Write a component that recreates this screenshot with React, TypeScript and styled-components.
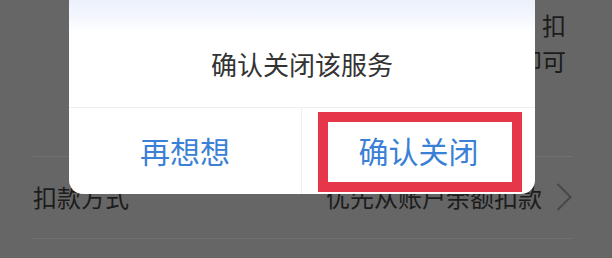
import React from 'react';
import styled, { createGlobalStyle } from 'styled-components';

const GlobalStyle = createGlobalStyle`
  html, body {
    margin: 0;
    padding: 0;
    background: #666666;
    overflow: hidden;
  }
  body {
    font-family: "Noto Sans CJK SC", "Noto Sans", sans-serif;
  }
`;

const Page = styled.div`
  position: relative;
  width: 612px;
  height: 258px;
  overflow: hidden;
  background: #666666;
  color: #1c1c1c;
`;

const Content = styled.div`
  display: flex;
  flex-direction: column;
  padding: 0 40px 0 33px;
`;

const Notice = styled.div`
  height: 157px;
  box-sizing: border-box;
  padding-top: 7px;
  padding-right: 6px;
  font-size: 24px;
  line-height: 36px;
  text-align: right;
  border-bottom: 1px solid #727272;
`;

const Row = styled.div`
  display: flex;
  align-items: center;
  justify-content: space-between;
  height: 82px;
  box-sizing: border-box;
  padding-bottom: 2px;
  border-bottom: 1px solid #727272;
  font-size: 24px;
`;

const RowValue = styled.div`
  display: flex;
  align-items: center;
  gap: 14px;
`;

const Mask = styled.div`
  position: absolute;
  inset: 0;
`;

const Dialog = styled.div`
  position: absolute;
  left: 69px;
  top: -12px;
  width: 466px;
  height: 206px;
  border-radius: 14px;
  background: linear-gradient(180deg, #e6edfb 0px, #f3f6fd 28px, #ffffff 44px);
  display: flex;
  flex-direction: column;
  overflow: hidden;
`;

const Title = styled.div`
  height: 120px;
  box-sizing: border-box;
  padding-top: 58px;
  text-align: center;
  font-size: 26px;
  line-height: 36px;
  color: #333333;
  border-bottom: 1px solid #efefef;
`;

const Actions = styled.div`
  flex: 1;
  display: grid;
  grid-template-columns: 1fr 1fr;
`;

const ActionButton = styled.button<{ $divider?: boolean }>`
  border: none;
  background: transparent;
  font-family: inherit;
  font-size: 30px;
  color: #3a80d6;
  padding: 0 0 2px;
  border-right: ${(p) => (p.$divider ? '1px solid #efefef' : 'none')};
`;

const Highlight = styled.div`
  position: absolute;
  left: 318px;
  top: 112px;
  width: 204px;
  height: 80px;
  box-sizing: border-box;
  border: 10px solid #e6364a;
`;

const Chevron = () => (
  <svg width="16" height="28" viewBox="0 0 16 28">
    <path d="M1.5 1 L14.5 14 L1.5 27" fill="none" stroke="#484848" strokeWidth="2" />
  </svg>
);

export default function App() {
  return (
    <Page>
      <GlobalStyle />
      <Content>
        <Notice>
          开通后将在每月账单日从您的账户中，扣
          <br />
          款，如需取消，可随时在此页面关闭即可
        </Notice>
        <Row>
          <span>扣款方式</span>
          <RowValue>
            优先从账户余额扣款
            <Chevron />
          </RowValue>
        </Row>
      </Content>
      <Mask>
        <Dialog>
          <Title>确认关闭该服务</Title>
          <Actions>
            <ActionButton $divider>再想想</ActionButton>
            <ActionButton>确认关闭</ActionButton>
          </Actions>
        </Dialog>
        <Highlight />
      </Mask>
    </Page>
  );
}
